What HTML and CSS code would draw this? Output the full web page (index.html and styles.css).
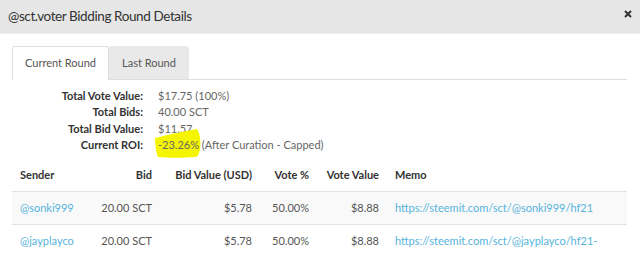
FILE: index.html
```html
<!DOCTYPE html>
<html lang="en">
<head>
  <meta charset="UTF-8">
  <meta name="viewport" content="width=device-width, initial-scale=1.0">
  <title>Bidding Round Details</title>
  <link rel="stylesheet" href="styles.css">
</head>
<body>
  <div class="modal">
    <div class="modal-header">
      <h4 class="modal-title">@sct.voter Bidding Round Details</h4>
      <svg class="close" width="8" height="8" viewBox="0 0 8 8"><path d="M1 1 L7 7 M7 1 L1 7" stroke="#333" stroke-width="2"/></svg>
    </div>

    <div class="modal-body">
      <ul class="tabs">
        <li class="tab active">Current Round</li>
        <li class="tab">Last Round</li>
      </ul>

      <div class="details">
        <div class="label">Total Vote Value:</div><div class="value">$17.75 (100%)</div>
        <div class="label">Total Bids:</div><div class="value">40.00 SCT</div>
        <div class="label">Total Bid Value:</div><div class="value">$11.57</div>
        <div class="label">Current ROI:</div>
        <div class="value"><span class="roi">-23.26%<svg class="marker" viewBox="0 0 46 29" preserveAspectRatio="none"><path d="M0 9 C8 7 24 3 42 0 C45 4 46 12 45 20 C44 25 43 28 40 28 C28 29 14 29 3 28 C1 24 0 16 0 9 Z" fill="#f5f500"/></svg></span> (After Curation - Capped)</div>
      </div>

      <table class="bids">
        <colgroup>
          <col style="width: 80px">
          <col style="width: 68px">
          <col style="width: 100px">
          <col style="width: 57px">
          <col style="width: 70px">
          <col>
        </colgroup>
        <thead>
          <tr>
            <th>Sender</th>
            <th class="num">Bid</th>
            <th class="num">Bid Value (USD)</th>
            <th class="num">Vote %</th>
            <th class="num">Vote Value</th>
            <th>Memo</th>
          </tr>
        </thead>
        <tbody id="bids-body"></tbody>
      </table>
    </div>
  </div>

  <script>
    const bids = [
      { sender: "sonki999", bid: "20.00 SCT", value: "$5.78", pct: "50.00%", vote: "$8.88", memo: "https://steemit.com/sct/@sonki999/hf21" },
      { sender: "jayplayco", bid: "20.00 SCT", value: "$5.78", pct: "50.00%", vote: "$8.88", memo: "https://steemit.com/sct/@jayplayco/hf21-" }
    ];
    const tbody = document.getElementById('bids-body');

    bids.forEach(b => {
      const tr = document.createElement('tr');
      tr.innerHTML =
        '<td><a href="#">@' + b.sender + '</a></td>' +
        '<td class="num">' + b.bid + '</td>' +
        '<td class="num">' + b.value + '</td>' +
        '<td class="num">' + b.pct + '</td>' +
        '<td class="num">' + b.vote + '</td>' +
        '<td><a href="#">' + b.memo + '</a></td>';
      tbody.appendChild(tr);
    });
  </script>
</body>
</html>
```

FILE: styles.css
```css
body {
  margin: 0;
  padding: 0;
  font-family: Lato, "Noto Sans", sans-serif;
  font-size: 11px;
  color: #555;
  background-color: #fff;
}

.modal-header {
  height: 33px;
  background-color: #e6e6e6;
  border-bottom: 1px solid #eee;
  display: flex;
  align-items: center;
  justify-content: space-between;
  padding: 0 8px 2px 8px;
  box-sizing: border-box;
  height: 34px;
}

.modal-title {
  margin: 0;
  font-size: 13.5px;
  font-weight: normal;
  color: #333;
  letter-spacing: -0.4px;
}

.close {
  display: block;
  margin-top: -4px;
}

.modal-body {
  padding: 12px 13px 12px 12px;
}

.tabs {
  list-style: none;
  margin: 0;
  padding: 0;
  display: flex;
  border-bottom: 1px solid #ddd;
}

.tab {
  height: 32px;
  line-height: 32px;
  padding: 0 12px;
  color: #555;
  background-color: #e9e9e9;
  border: 1px solid #e9e9e9;
  border-bottom: none;
  margin-bottom: -1px;
  border-radius: 3px 3px 0 0;
}

.tab.active {
  background-color: #fff;
  border-color: #ddd;
  height: 33px;
}

.details {
  display: grid;
  grid-template-columns: 131px auto;
  column-gap: 15px;
  line-height: 16.3px;
  margin: 8px 0 6px;
  color: #666;
}

.details .label {
  text-align: right;
  font-weight: 700;
  color: #333;
}

.roi {
  position: relative;
  z-index: 0;
}

.marker {
  position: absolute;
  left: -3px;
  top: -9px;
  width: 46px;
  height: 29px;
  z-index: -1;
}

.bids {
  width: 615px;
  table-layout: fixed;
  border-collapse: collapse;
}

.bids th,
.bids td {
  height: 16px;
  padding: 8px;
  line-height: 16px;
  text-align: left;
  white-space: nowrap;
  overflow: hidden;
}

.bids th {
  font-weight: 700;
  color: #333;
  border-bottom: 1px solid #e2e2e2;
}

.bids td {
  border-top: 1px solid #e2e2e2;
}

.bids tbody tr:nth-child(odd) {
  background-color: #f9f9f9;
}

.bids .num {
  text-align: right;
}

.bids a {
  color: #55b4dc;
  text-decoration: none;
}
```
